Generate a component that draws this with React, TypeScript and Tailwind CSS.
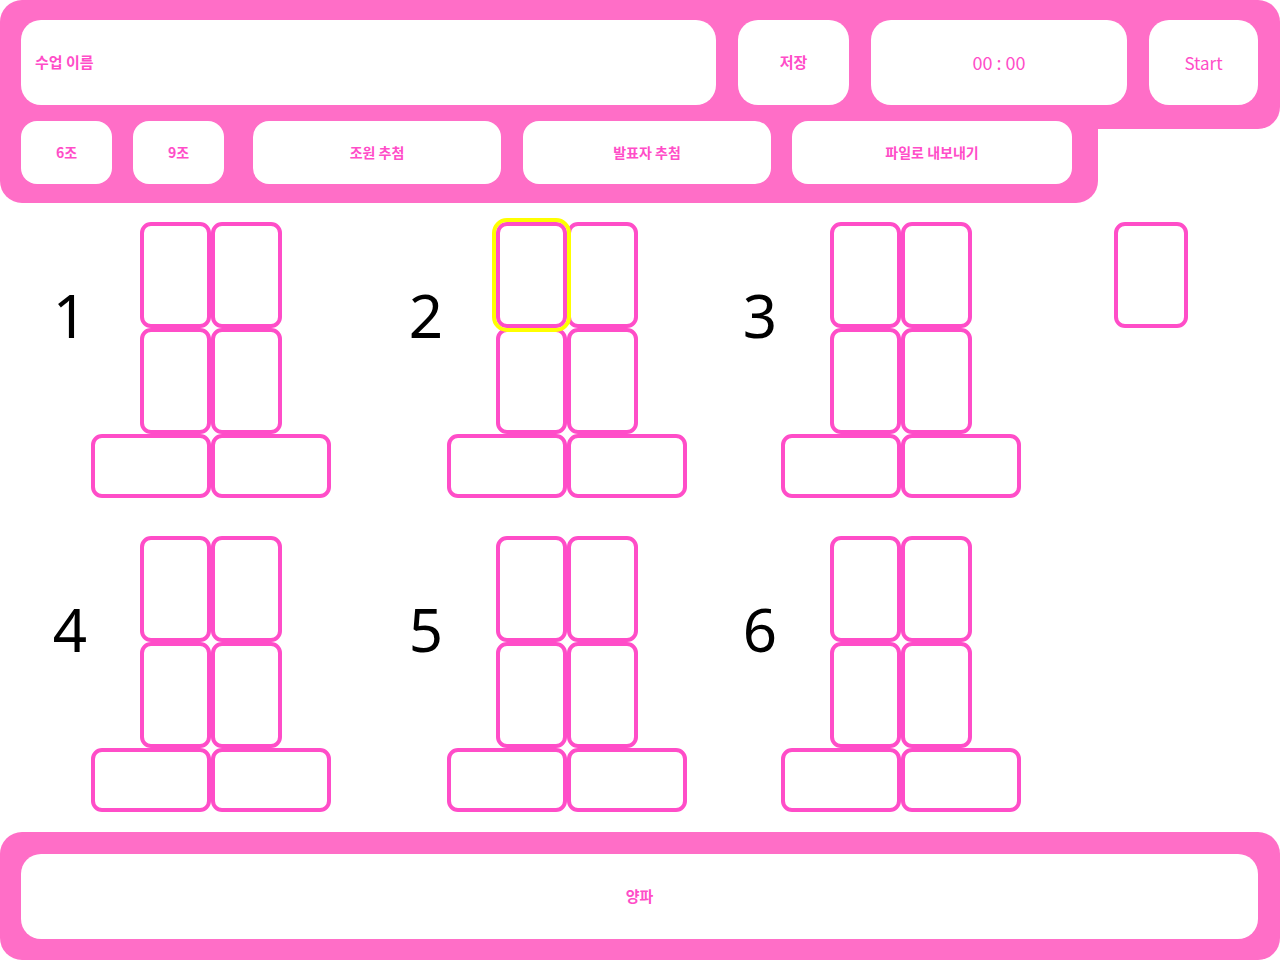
const PINK = "bg-[#ff6ec7]";

type SeatProps = { wide?: boolean; selected?: boolean };

function Seat({ wide, selected }: SeatProps) {
  return (
    <div
      className={
        (wide ? "w-[120px] h-[64px] " : "w-[71px] h-[106px] ") +
        "rounded-[11px] border-4 border-[#ff4dc8] bg-white " +
        (selected ? "outline-4 outline-[#ffff00] relative z-10" : "")
      }
    />
  );
}

function Group({ num, selectedFirst }: { num: number; selectedFirst?: boolean }) {
  return (
    <div className="flex flex-col">
      <div className="flex">
        <div className="w-[140px] h-[212px] flex items-center justify-center pb-[26px]">
          <span className="text-[60px] leading-none text-black font-normal font-['Noto_Sans','Noto_Sans_CJK_KR',sans-serif]">
            {num}
          </span>
        </div>
        <div className="grid grid-cols-[71px_71px]">
          <Seat selected={selectedFirst} />
          <Seat />
          <Seat />
          <Seat />
        </div>
      </div>
      <div className="flex ml-[91px]">
        <Seat wide />
        <Seat wide />
      </div>
    </div>
  );
}

function App() {
  return (
    <div className="w-[1280px] h-[960px] bg-white flex flex-col font-['Noto_Sans_CJK_KR',sans-serif] text-[#ff4dc8]">
      <header className="flex flex-col">
        <div className={`${PINK} flex gap-[22px] rounded-t-[22px] rounded-br-[22px] pt-[20px] pb-[24px] pl-[21px] pr-[22px]`}>
          <div className="flex-1 h-[85px] bg-white rounded-[20px] flex items-center pl-[14px] text-[15px] font-bold">
            수업 이름
          </div>
          <button className="w-[111px] h-[85px] bg-white rounded-[20px] text-[15px] font-bold">저장</button>
          <div className="w-[256px] h-[85px] bg-white rounded-[20px] flex items-center justify-center text-[18px]">
            00 : 00
          </div>
          <button className="w-[109px] h-[85px] bg-white rounded-[20px] text-[17px]">Start</button>
        </div>
        <div className={`${PINK} -mt-[8px] w-[1098px] rounded-b-[22px] pl-[21px] pb-[19px] flex text-[14px] font-bold`}>
          <button className="w-[91px] h-[63px] bg-white rounded-[16px]">6조</button>
          <button className="ml-[21px] w-[91px] h-[63px] bg-white rounded-[16px]">9조</button>
          <button className="ml-[29px] w-[248px] h-[63px] bg-white rounded-[16px]">조원 추첨</button>
          <button className="ml-[22px] w-[248px] h-[63px] bg-white rounded-[16px]">발표자 추첨</button>
          <button className="ml-[21px] w-[280px] h-[63px] bg-white rounded-[16px]">파일로 내보내기</button>
        </div>
      </header>

      <main className="h-[629px] pt-[19px] flex flex-col gap-[38px]">
        <div className="flex">
          <div className="w-[356px]">
            <Group num={1} />
          </div>
          <div className="w-[334px]">
            <Group num={2} selectedFirst />
          </div>
          <div className="w-[334px]">
            <Group num={3} />
          </div>
          <div className="pl-[90px]">
            <div className="w-[74px] h-[106px] rounded-[11px] border-4 border-[#ff4dc8]" />
          </div>
        </div>
        <div className="flex">
          <div className="w-[356px]">
            <Group num={4} />
          </div>
          <div className="w-[334px]">
            <Group num={5} />
          </div>
          <div className="w-[334px]">
            <Group num={6} />
          </div>
        </div>
      </main>

      <footer className={`${PINK} h-[128px] rounded-[22px] pt-[22px] pb-[21px] pl-[21px] pr-[22px]`}>
        <div className="h-full bg-white rounded-[20px] flex items-center justify-center text-[15px] font-bold">
          양파
        </div>
      </footer>
    </div>
  );
}

export default App;
